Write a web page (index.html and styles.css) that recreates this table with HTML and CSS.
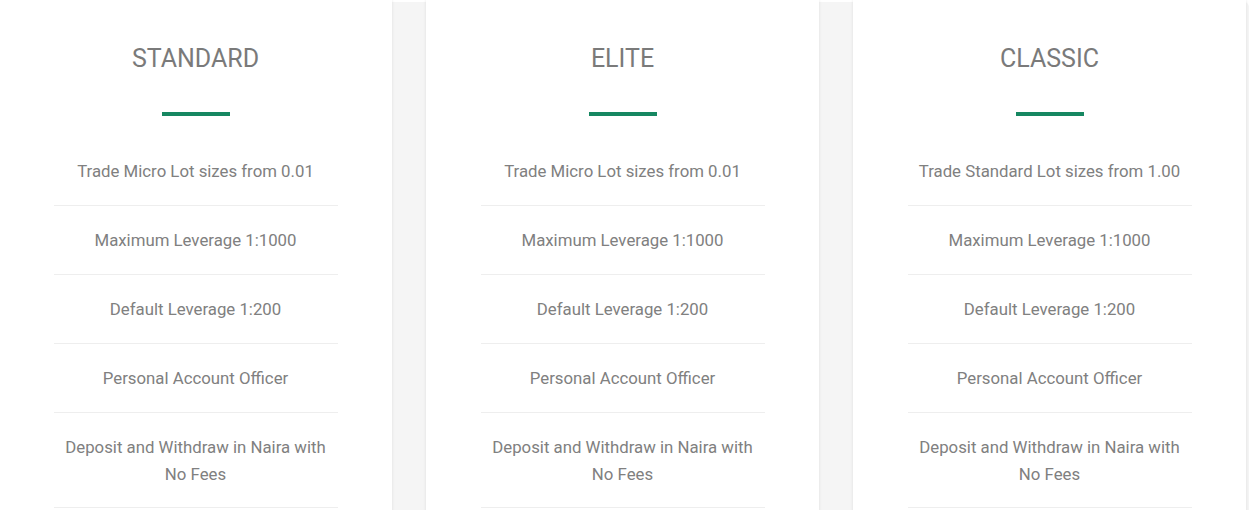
FILE: index.html
```html
<!DOCTYPE html>
<html lang="en">
<head>
<meta charset="utf-8">
<title>Account Types</title>
<link rel="stylesheet" href="styles.css">
</head>
<body>
<section class="pricing">
  <div class="card">
    <h3 class="card-title">STANDARD</h3>
    <div class="bar"></div>
    <ul class="features">
      <li>Trade Micro Lot sizes from 0.01</li>
      <li>Maximum Leverage 1:1000</li>
      <li>Default Leverage 1:200</li>
      <li>Personal Account Officer</li>
      <li>Deposit and Withdraw in Naira with No Fees</li>
    </ul>
  </div>
  <div class="card">
    <h3 class="card-title">ELITE</h3>
    <div class="bar"></div>
    <ul class="features">
      <li>Trade Micro Lot sizes from 0.01</li>
      <li>Maximum Leverage 1:1000</li>
      <li>Default Leverage 1:200</li>
      <li>Personal Account Officer</li>
      <li>Deposit and Withdraw in Naira with No Fees</li>
    </ul>
  </div>
  <div class="card">
    <h3 class="card-title">CLASSIC</h3>
    <div class="bar"></div>
    <ul class="features">
      <li>Trade Standard Lot sizes from 1.00</li>
      <li>Maximum Leverage 1:1000</li>
      <li>Default Leverage 1:200</li>
      <li>Personal Account Officer</li>
      <li>Deposit and Withdraw in Naira with No Fees</li>
    </ul>
  </div>
</section>
</body>
</html>
```

FILE: styles.css
```css
html, body {
  margin: 0;
  padding: 0;
  background: #ffffff;
  overflow: hidden;
}
body {
  font-family: Roboto, "Liberation Sans", Arial, sans-serif;
  color: #7f7f7f;
  height: 510px;
}
.pricing {
  display: flex;
  gap: 34px;
  margin: 2px 0 0 -1px;
  width: 1250px;
  height: 600px;
  background: #f5f5f5;
  border-radius: 5px 5px 0 0;
}
.card {
  flex: 0 0 393px;
  margin-top: -2px;
  background: #ffffff;
  box-shadow: 0 0 3px rgba(0, 0, 0, 0.10);
  padding-top: 45px;
  text-align: center;
}
.card-title {
  margin: 0;
  font-size: 25px;
  line-height: 28px;
  font-weight: 400;
  color: #7a7a7a;
}
.bar {
  width: 68px;
  height: 4px;
  margin: 39px auto 21px;
  background: #168761;
}
.features {
  list-style: none;
  margin: 0 auto;
  padding: 0;
  width: 284px;
}
.features li {
  padding: 21px 0 20px;
  line-height: 27px;
  font-size: 16.8px;
  border-bottom: 1px solid #eeeeee;
  color: #808080;
}
.features li:last-child {
  padding: 21px 0 19px;
}
```
